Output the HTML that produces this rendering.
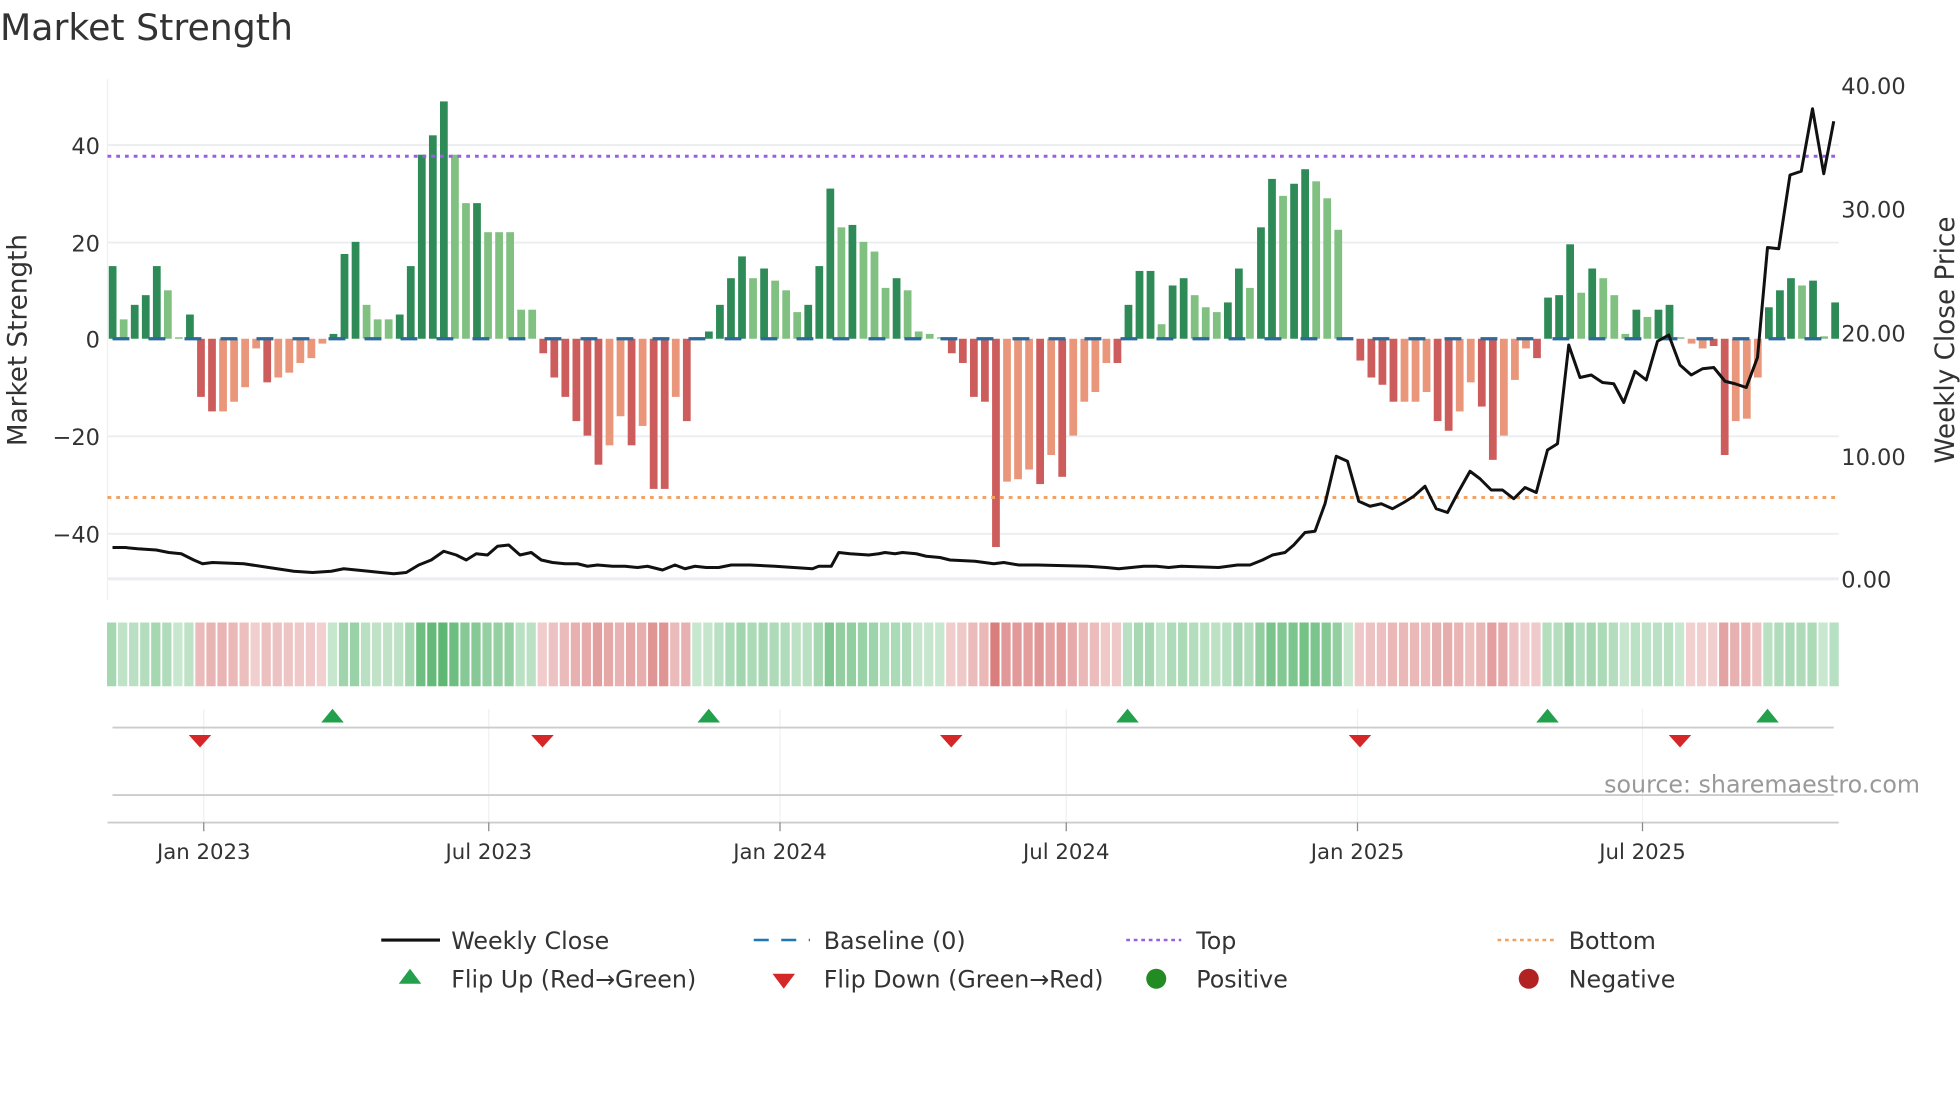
<!DOCTYPE html>
<html><head><meta charset="utf-8"><style>
html,body{margin:0;padding:0;background:#fff;width:1960px;height:1102px;overflow:hidden}
svg{display:block;font-family:"DejaVu Sans","Liberation Sans",sans-serif}
</style></head><body>
<svg id="s" width="1960" height="1102" viewBox="0 0 1568 881.6" xmlns="http://www.w3.org/2000/svg">
<rect width="1568" height="882" fill="#fff"/>
<text x="0" y="32" font-size="29" fill="#333">Market Strength</text>
<g stroke="#ebedf0" stroke-width="1.5">
<line x1="86" x2="1471" y1="116" y2="116"/><line x1="86" x2="1471" y1="194" y2="194"/>
<line x1="86" x2="1471" y1="349" y2="349"/><line x1="86" x2="1471" y1="427" y2="427"/>
<line x1="86" x2="1471" y1="463" y2="463" stroke-width="2.5"/>
</g>
<line x1="86" x2="86" y1="63" y2="480" stroke="#eef0f3"/>
<g font-size="18" fill="#333" text-anchor="end">
<text x="80" y="123">40</text><text x="80" y="201">20</text><text x="80" y="278">0</text>
<text x="80" y="356">−20</text><text x="80" y="434">−40</text></g>
<g font-size="18" fill="#333">
<text x="1473" y="75">40.00</text><text x="1473" y="174">30.00</text><text x="1473" y="273">20.00</text>
<text x="1473" y="372">10.00</text><text x="1473" y="470">0.00</text></g>
<text transform="translate(21,272) rotate(-90)" font-size="21" fill="#333" text-anchor="middle">Market Strength</text>
<text transform="translate(1563,272) rotate(-90)" font-size="21" fill="#333" text-anchor="middle">Weekly Close Price</text>
<g id="bars"></g>
<line x1="86" x2="1471" y1="125" y2="125" stroke="#9b5de5" stroke-width="2.4" stroke-dasharray="3,4"/>
<line x1="86" x2="1471" y1="398" y2="398" stroke="#f4a261" stroke-width="2.4" stroke-dasharray="3,4"/>
<line x1="90" x2="1471" y1="271" y2="271" stroke="#2b6a9a" stroke-width="2.6" stroke-dasharray="13.5,15.3"/>
<polyline id="price" fill="none" stroke="#111" stroke-width="2.4" stroke-linejoin="round"/>
<g id="strip"></g>
<g stroke="#eef0f3" stroke-width="1">
<line x1="163" x2="163" y1="567" y2="660"/><line x1="391" x2="391" y1="567" y2="660"/><line x1="624" x2="624" y1="567" y2="660"/>
<line x1="853" x2="853" y1="567" y2="660"/><line x1="1086" x2="1086" y1="567" y2="660"/><line x1="1314" x2="1314" y1="567" y2="660"/></g>
<line x1="90" x2="1467" y1="582" y2="582" stroke="#ccc" stroke-width="1.5"/>
<line x1="90" x2="1467" y1="636" y2="636" stroke="#ccc" stroke-width="1.5"/>
<line x1="86" x2="1471" y1="658" y2="658" stroke="#ccc" stroke-width="1.5"/>
<g stroke="#888"><line x1="163" x2="163" y1="658" y2="665"/><line x1="391" x2="391" y1="658" y2="665"/><line x1="624" x2="624" y1="658" y2="665"/><line x1="853" x2="853" y1="658" y2="665"/><line x1="1086" x2="1086" y1="658" y2="665"/><line x1="1314" x2="1314" y1="658" y2="665"/></g>
<g font-size="17" fill="#333" text-anchor="middle">
<text x="163" y="687">Jan 2023</text><text x="391" y="687">Jul 2023</text><text x="624" y="687">Jan 2024</text>
<text x="853" y="687">Jul 2024</text><text x="1086" y="687">Jan 2025</text><text x="1314" y="687">Jul 2025</text></g>
<g id="mk"></g>
<text x="1536" y="634" font-size="19" fill="#999" text-anchor="end">source: sharemaestro.com</text>
<g font-size="19" fill="#333">
<line x1="305" x2="352" y1="752" y2="752" stroke="#111" stroke-width="2.5"/><text x="361" y="759">Weekly Close</text>
<line x1="603" x2="648" y1="752" y2="752" stroke="#1f77b4" stroke-width="2" stroke-dasharray="12,10"/><text x="659" y="759">Baseline (0)</text>
<line x1="901" x2="945" y1="752" y2="752" stroke="#9b5de5" stroke-width="2" stroke-dasharray="3,3"/><text x="957" y="759">Top</text>
<line x1="1198" x2="1243" y1="752" y2="752" stroke="#f4a261" stroke-width="2" stroke-dasharray="3,3"/><text x="1255" y="759">Bottom</text>
<polygon points="319,787 337,787 328,775" fill="#22a04b"/><text x="361" y="790">Flip Up (Red→Green)</text>
<polygon points="618,779 636,779 627,791" fill="#d62728"/><text x="659" y="790">Flip Down (Green→Red)</text>
<circle cx="925" cy="783" r="8" fill="#228b22"/><text x="957" y="790">Positive</text>
<circle cx="1223" cy="783" r="8" fill="#b22222"/><text x="1255" y="790">Negative</text>
</g>
</svg>
<script>
var NS="http://www.w3.org/2000/svg";
var d=[[15,1],[4,0],[7,1],[9,1],[15,1],[10,0],[0.3,0],[5,1],[-12,1],[-15,1],[-15,0],[-13,0],[-10,0],[-2,0],[-9,1],[-8,0],[-7,0],[-5,0],[-4,0],[-1,0],[1,1],[17.5,1],[20,1],[7,0],[4,0],[4,0],[5,1],[15,1],[38,1],[42,1],[49,1],[38,0],[28,0],[28,1],[22,0],[22,0],[22,0],[6,0],[6,0],[-3,1],[-8,1],[-12,1],[-17,1],[-20,1],[-26,1],[-22,0],[-16,0],[-22,1],[-18,0],[-31,1],[-31,1],[-12,0],[-17,1],[0.3,1],[1.5,1],[7,1],[12.5,1],[17,1],[12.5,0],[14.5,1],[12,0],[10,0],[5.5,0],[7,1],[15,1],[31,1],[23,0],[23.5,1],[20,0],[18,0],[10.5,0],[12.5,1],[10,0],[1.5,0],[1,0],[0.3,0],[-3,1],[-5,1],[-12,1],[-13,1],[-43,1],[-29.5,0],[-29,0],[-27,0],[-30,1],[-24,0],[-28.5,1],[-20,0],[-13,0],[-11,0],[-5,0],[-5,1],[7,1],[14,1],[14,1],[3,0],[11,1],[12.5,1],[9,0],[6.5,0],[5.5,0],[7.5,1],[14.5,1],[10.5,0],[23,1],[33,1],[29.5,0],[32,1],[35,1],[32.5,0],[29,0],[22.5,0],[0.3,0],[-4.5,1],[-8,1],[-9.5,1],[-13,1],[-13,0],[-13,0],[-11,0],[-17,1],[-19,1],[-15,0],[-9,0],[-14,1],[-25,1],[-20,0],[-8.5,0],[-2,0],[-4,1],[8.5,1],[9,1],[19.5,1],[9.5,0],[14.5,1],[12.5,0],[9,0],[1,0],[6,1],[4.5,0],[6,1],[7,1],[0.3,0],[-1,0],[-2,0],[-1.5,1],[-24,1],[-17,0],[-16.5,0],[-8,0],[6.5,1],[10,1],[12.5,1],[11,0],[12,1],[0.5,0],[7.5,1]];
var n=d.length,step=(1468-90)/(n-1),B=document.getElementById("bars"),S=document.getElementById("strip");
function r(g,x,y,w,h,f,o){var e=document.createElementNS(NS,"rect");e.setAttribute("x",x);e.setAttribute("y",y);e.setAttribute("width",w);e.setAttribute("height",h);e.setAttribute("fill",f);if(o!=null)e.setAttribute("fill-opacity",o);g.appendChild(e);}
for(var i=0;i<n;i++){var v=d[i][0],k=d[i][1],x=90+i*step,h=Math.abs(v)*3.875;
var c=v>=0?(k?"#2e8b57":"#80c080"):(k?"#cd5c5c":"#e9967a");
r(B,x-3,v>=0?271-h:271,6.2,Math.max(h,0.5),c);
var a=0.3+Math.min(Math.abs(v),45)/45*0.6;
r(S,x-4.4,498,7.4,51,v>=0?"#4caf63":"#d46a6a",a);}
var p=[[90,438],[100,438],[110,439],[125,440],[135,442],[145,443],[155,448],[162,451],[170,450],[195,451],[215,454],[235,457],[250,458],[265,457],[275,455],[295,457],[315,459],[325,458],[335,452],[345,448],[355,441],[365,444],[373,448],[381,443],[390,444],[398,437],[407,436],[416,444],[425,442],[433,448],[442,450],[452,451],[462,451],[470,453],[478,452],[490,453],[500,453],[510,454],[518,453],[530,456],[540,452],[548,455],[556,453],[565,454],[575,454],[585,452],[600,452],[620,453],[650,455],[655,453],[665,453],[671,442],[680,443],[695,444],[703,443],[708,442],[716,443],[722,442],[733,443],[741,445],[752,446],[760,448],[780,449],[795,451],[803,450],[815,452],[830,452],[870,453],[885,454],[895,455],[905,454],[915,453],[925,453],[935,454],[945,453],[975,454],[990,452],[1000,452],[1010,448],[1018,444],[1028,442],[1035,436],[1044,426],[1052,425],[1060,403],[1069,365],[1078,369],[1087,401],[1096,405],[1105,403],[1114,407],[1123,402],[1131,397],[1140,389],[1149,407],[1158,410],[1167,393],[1176,377],[1184,383],[1193,392],[1202,392],[1211,399],[1220,390],[1229,394],[1238,360],[1246,355],[1255,276],[1264,302],[1273,300],[1282,306],[1291,307],[1299,322],[1308,297],[1317,304],[1326,273],[1335,268],[1344,292],[1353,300],[1362,295],[1371,294],[1380,305],[1388,307],[1397,310],[1406,286],[1414,198],[1423,199],[1432,140],[1441,137],[1450,87],[1459,139],[1467,97]];
document.getElementById("price").setAttribute("points",p.map(function(a){return a.join(",")}).join(" "));
var M=document.getElementById("mk");
[266,567,902,1238,1414].forEach(function(x){var e=document.createElementNS(NS,"polygon");e.setAttribute("points",(x-9)+",578 "+(x+9)+",578 "+x+",567");e.setAttribute("fill","#22a04b");M.appendChild(e);});
[160,434,761,1088,1344].forEach(function(x){var e=document.createElementNS(NS,"polygon");e.setAttribute("points",(x-9)+",588 "+(x+9)+",588 "+x+",598");e.setAttribute("fill","#d62728");M.appendChild(e);});
</script>
</body></html>
